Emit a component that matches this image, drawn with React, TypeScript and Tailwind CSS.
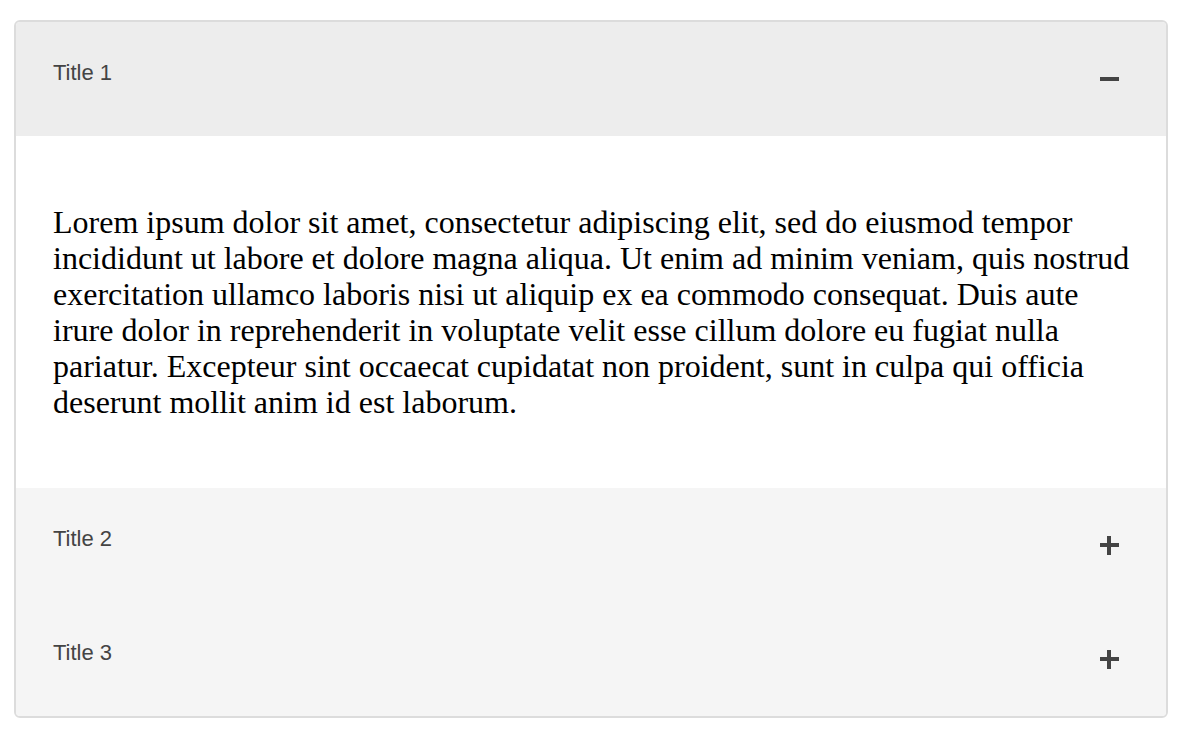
import { useState } from 'react';

const items = [
  { title: 'Title 1', body: 'Lorem ipsum dolor sit amet, consectetur adipiscing elit, sed do eiusmod tempor incididunt ut labore et dolore magna aliqua. Ut enim ad minim veniam, quis nostrud exercitation ullamco laboris nisi ut aliquip ex ea commodo consequat. Duis aute irure dolor in reprehenderit in voluptate velit esse cillum dolore eu fugiat nulla pariatur. Excepteur sint occaecat cupidatat non proident, sunt in culpa qui officia deserunt mollit anim id est laborum.' },
  { title: 'Title 2', body: 'Lorem ipsum dolor sit amet.' },
  { title: 'Title 3', body: 'Lorem ipsum dolor sit amet.' },
];

export default function App() {
  const [open, setOpen] = useState(0);

  return (
    <div className="bg-white min-h-[740px] pt-5 px-[14px]">
      <div className="w-[1154px] border-2 border-[#dcdcdc] rounded-md overflow-hidden">
        {items.map((item, i) => {
          const isOpen = open === i;
          return (
            <div key={item.title}>
              <button
                onClick={() => setOpen(isOpen ? -1 : i)}
                className={`w-full h-[114px] flex items-center justify-between pl-[37px] pr-[47px] text-left ${
                  isOpen ? 'bg-[#ededed]' : 'bg-[#f5f5f5]'
                }`}
              >
                <span className="text-[22px] text-[#444] -mt-[14px] font-['Liberation_Sans',Arial,sans-serif]">{item.title}</span>
                <span className="w-[19px] h-[19px] relative">
                  <span className="absolute left-0 right-0 top-[7px] h-[4px] bg-[#444]" />
                  {!isOpen && <span className="absolute top-0 bottom-0 left-[7px] w-[4px] bg-[#444]" />}
                </span>
              </button>
              {isOpen && (
                <div className="bg-white pt-[68px] pb-[68px] pl-[37px] pr-[28px]">
                  <p className="text-[32px] leading-[36px] text-black font-['Liberation_Serif','Times_New_Roman',serif]">
                    {item.body}
                  </p>
                </div>
              )}
            </div>
          );
        })}
      </div>
    </div>
  );
}
